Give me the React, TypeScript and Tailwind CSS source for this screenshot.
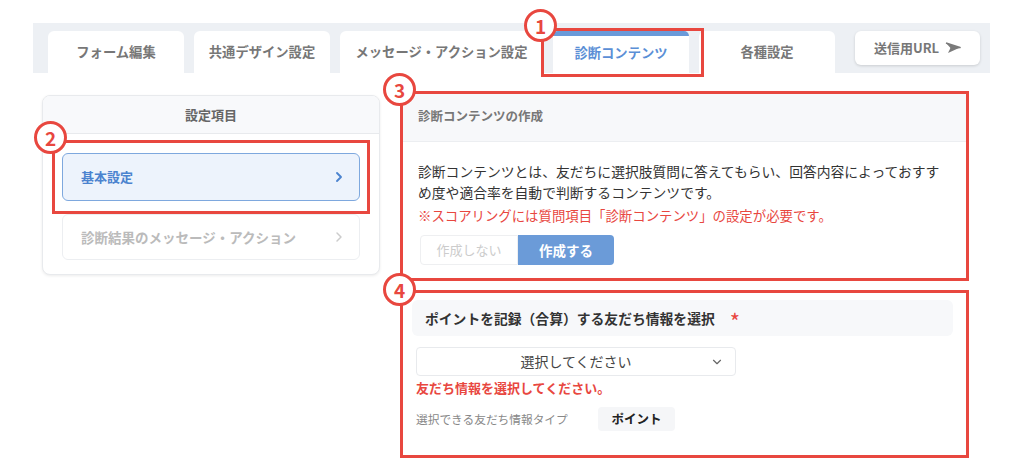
import { ChevronRight, ChevronDown } from 'lucide-react'

const tabs = [
  { label: 'フォーム編集', w: 'w-[136px]' },
  { label: '共通デザイン設定', w: 'w-[136px]' },
  { label: 'メッセージ・アクション設定', w: 'w-[203px]' },
]

function Badge({ n, className }: { n: number; className: string }) {
  return (
    <div
      className={`absolute flex h-[33px] w-[33px] items-center justify-center rounded-full border-[3px] border-[#e8473f] bg-white text-[19px] font-bold leading-none text-[#e8473f] ${className}`}
    >
      {n}
    </div>
  )
}

function SendIcon() {
  return (
    <svg width="16" height="12" viewBox="0 0 16 12" className="ml-1.5">
      <path d="M1 1 L15 5.5 L3 11 L5.5 6 Z" fill="#7a7a7a" />
      <path d="M1 1 L15 5.5 L5.5 6" fill="none" stroke="#7a7a7a" strokeWidth="1.6" strokeLinejoin="round" />
    </svg>
  )
}

export default function App() {
  return (
    <div className="relative h-[470px] w-[1024px] overflow-hidden bg-white font-['Noto_Sans_CJK_JP','Noto_Sans',sans-serif]">
      {/* Tab bar */}
      <div className="ml-[33px] mt-[23px] flex h-[50px] w-[957px] items-end bg-[#edf0f4] pl-[15px]">
        <div className="flex h-[42px] items-end gap-[10px]">
          {tabs.map((t) => (
            <div
              key={t.label}
              className={`flex h-full ${t.w} items-center justify-center rounded-t-md bg-white text-[13.3px] font-bold text-[#777]`}
            >
              {t.label}
            </div>
          ))}
          <div className="flex h-full w-[136px] flex-col rounded-t-md bg-white">
            <div className="h-[5px] rounded-t-md bg-[#6a9ad9]" />
            <div className="flex flex-1 items-center justify-center pb-[4px] text-[13.3px] font-bold text-[#5b8fd6]">
              診断コンテンツ
            </div>
          </div>
          <div className="flex h-full w-[136px] items-center justify-center rounded-t-md bg-white text-[13.3px] font-bold text-[#777]">
            各種設定
          </div>
        </div>
        <div className="mb-[8px] ml-[20px] flex h-[34px] w-[125px] items-center justify-center rounded-md bg-white text-[13px] font-bold text-[#777] shadow-[0_1px_3px_rgba(0,0,0,0.15)]">
          送信用URL
          <SendIcon />
        </div>
      </div>

      {/* Content */}
      <div className="flex gap-[20px] pl-[42px]">
        {/* Left card */}
        <div className="mt-[22px] h-[180px] w-[338px] overflow-hidden rounded-lg border border-[#e8eaed] bg-white shadow-[0_1px_3px_rgba(0,0,0,0.08)]">
          <div className="flex h-[38px] items-center justify-center border-b border-[#e8eaed] bg-[#f8f9fb] text-[13px] font-bold text-[#666]">
            設定項目
          </div>
          <div className="flex flex-col gap-[13px] px-[19px] pt-[19px]">
            <div className="flex h-[48px] items-center justify-between rounded-md border border-[#7ea8de] bg-[#edf3fc] pl-[18px] pr-[12px] text-[13px] font-bold text-[#4b83cf]">
              基本設定
              <ChevronRight size={16} strokeWidth={2.8} className="text-[#4b83cf]" />
            </div>
            <div className="flex h-[46px] items-center justify-between rounded-md border border-[#eceef1] bg-white pl-[18px] pr-[12px] text-[13.5px] font-bold text-[#bbb]">
              診断結果のメッセージ・アクション
              <ChevronRight size={16} strokeWidth={2.2} className="text-[#ccc]" />
            </div>
          </div>
        </div>

        {/* Right column */}
        <div className="mt-[19px] flex w-[568px] flex-col gap-[11px]">
          <div className="h-[188px] bg-white">
            <div className="flex h-[50px] items-center border-b border-[#eceef1] bg-[#f7f8fa] px-[18px] text-[12.5px] font-bold text-[#777]">
              診断コンテンツの作成
            </div>
            <div className="px-[18px] pt-[19px]">
              <p className="w-[530px] text-[13.8px] leading-[21px] text-[#333]">
                診断コンテンツとは、友だちに選択肢質問に答えてもらい、回答内容によっておすすめ度や適合率を自動で判断するコンテンツです。
              </p>
              <p className="mt-[2px] text-[13.4px] leading-[20px] text-[#e8473f]">
                ※スコアリングには質問項目「診断コンテンツ」の設定が必要です。
              </p>
              <div className="ml-[2px] mt-[10px] flex h-[30px] w-[194px]">
                <div className="flex flex-1 items-center justify-center rounded-l border border-[#eeeff1] bg-white text-[13px] text-[#ccc]">
                  作成しない
                </div>
                <div className="flex flex-1 items-center justify-center rounded-r bg-[#6b9bd8] text-[13.5px] font-bold text-white">
                  作成する
                </div>
              </div>
            </div>
          </div>

          <div className="h-[166px] bg-white pl-[12px] pr-[15px] pt-[9px]">
            <div className="flex h-[36px] items-center rounded-md bg-[#f7f8fa] px-[13px] text-[13.8px] font-bold text-[#333]">
              ポイントを記録（合算）する友だち情報を選択
              <span className="ml-[15px] mt-[4px] text-[22px] font-normal leading-none text-[#e8473f]">*</span>
            </div>
            <div className="relative ml-[4px] mt-[11px] flex h-[29px] w-[320px] items-center justify-center rounded border border-[#e8eaed] text-[14px] text-[#444]">
              選択してください
              <ChevronDown size={14} strokeWidth={2} className="absolute right-[11px] text-[#666]" />
            </div>
            <p className="ml-[4px] mt-[2px] text-[13px] font-bold leading-[20px] text-[#e8473f]">
              友だち情報を選択してください。
            </p>
            <div className="ml-[4px] mt-[9px] flex items-center">
              <span className="w-[182px] text-[11.7px] text-[#888]">選択できる友だち情報タイプ</span>
              <span className="flex h-[24px] w-[77px] items-center justify-center rounded bg-[#f5f6f8] text-[12.5px] font-bold text-[#222]">
                ポイント
              </span>
            </div>
          </div>
        </div>
      </div>

      {/* Annotation overlays */}
      <div className="absolute left-[541px] top-[28px] h-[49px] w-[163px] border-[3px] border-[#e8473f]" />
      <div className="absolute left-[52px] top-[140px] h-[74px] w-[318px] border-[3px] border-[#e8473f]" />
      <div className="absolute left-[400px] top-[91px] h-[190px] w-[569px] border-[3px] border-[#e8473f]" />
      <div className="absolute left-[400px] top-[290px] h-[168px] w-[569px] border-[3px] border-[#e8473f]" />
      <Badge n={1} className="left-[524px] top-[9px]" />
      <Badge n={2} className="left-[34px] top-[121px]" />
      <Badge n={3} className="left-[383px] top-[73px]" />
      <Badge n={4} className="left-[383px] top-[273px]" />
    </div>
  )
}
